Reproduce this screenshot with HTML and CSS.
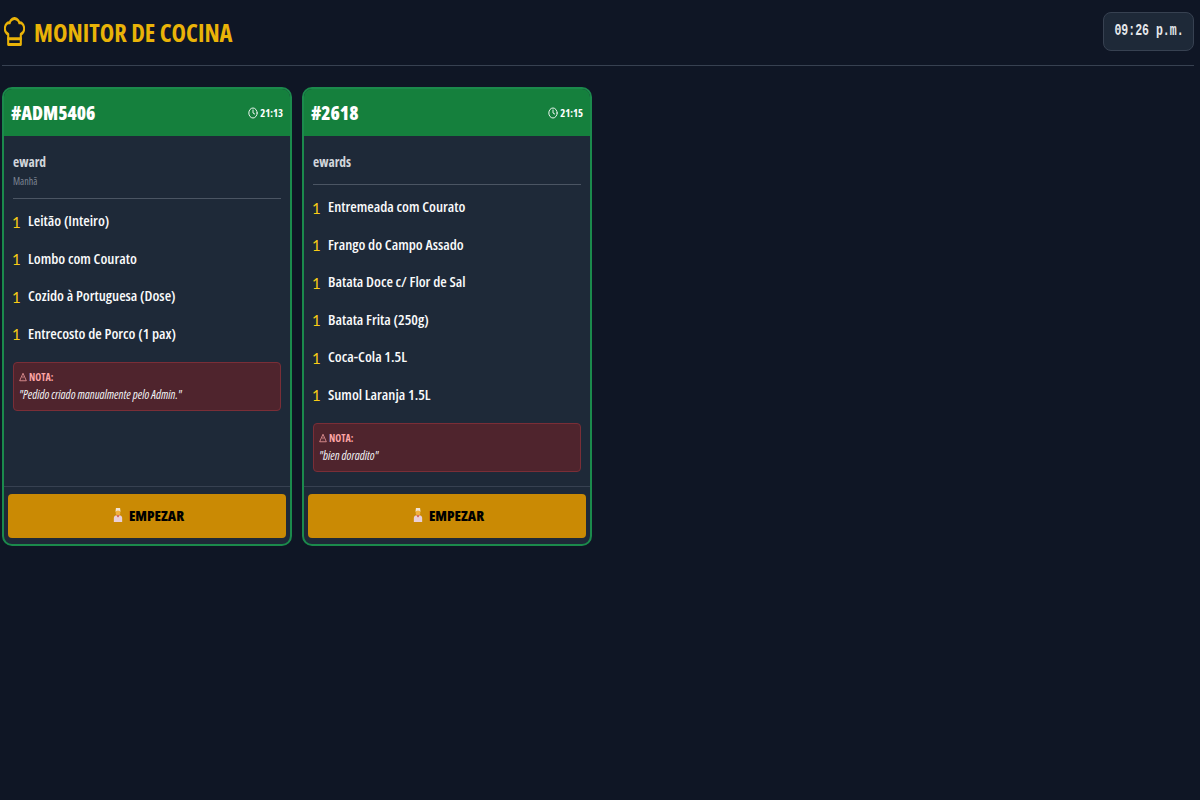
FILE: index.html
```html
<!DOCTYPE html>
<html lang="en">
<head>
    <meta charset="UTF-8">
    <meta name="viewport" content="width=device-width, initial-scale=1.0">
    <title>Monitor de Cocina</title>
    <link rel="stylesheet" href="styles.css">
</head>
<body>
    <header class="topbar">
        <h1 class="title">
            <svg class="title-icon" viewBox="2 2 20 20" preserveAspectRatio="none"><path d="M6 13.87A4 4 0 0 1 7.41 6a5.11 5.11 0 0 1 1.05-1.54 5 5 0 0 1 7.08 0A5.11 5.11 0 0 1 16.59 6 4 4 0 0 1 18 13.87V21H6Z"/><path d="M6 17h12"/></svg>
            <span class="title-text">MONITOR DE COCINA</span>
        </h1>
        <div class="clock"><span class="clock-text">09:26 p.m.</span></div>
    </header>

    <main class="orders">
        <article class="card">
            <div class="card-head">
                <span class="order-id">#ADM5406</span>
                <span class="order-time">
                    <svg class="clock-icon" viewBox="0 0 24 24" preserveAspectRatio="none"><circle cx="12" cy="12" r="10"/><path d="M12 6v6l4 2"/></svg>
                    21:13
                </span>
            </div>
            <div class="card-body">
                <div class="customer">
                    <div class="customer-name">eward</div>
                    <div class="customer-sub">Manhã</div>
                </div>
                <ul class="items">
                    <li class="item"><span class="qty">1</span><span class="item-name">Leitão (Inteiro)</span></li>
                    <li class="item"><span class="qty">1</span><span class="item-name">Lombo com Courato</span></li>
                    <li class="item"><span class="qty">1</span><span class="item-name">Cozido à Portuguesa (Dose)</span></li>
                    <li class="item"><span class="qty">1</span><span class="item-name">Entrecosto de Porco (1 pax)</span></li>
                </ul>
                <div class="note">
                    <div class="note-label">
                        <svg class="warn-icon" viewBox="0 0 24 24" preserveAspectRatio="none"><path d="M12 3 2 21h20Z"/><path d="M12 10v5M12 17.5v.5"/></svg>
                        NOTA:
                    </div>
                    <div class="note-text">"Pedido criado manualmente pelo Admin."</div>
                </div>
            </div>
            <div class="card-foot">
                <button class="start-btn">
                    <svg class="cook-icon" viewBox="0 0 12 18"><path class="cook-hat" d="M3.500 .5h5l.5 4.500H3Z"/><path class="cook-coat" d="M1 17.500v-5C1 10.500 3 9 6 9s5 1.500 5 3.500v5Z"/><circle class="cook-face" cx="6" cy="6.500" r="2.900"/><path class="cook-tie" d="M4 9.400h4L6 12Z"/></svg>
                    EMPEZAR
                </button>
            </div>
        </article>

        <article class="card">
            <div class="card-head">
                <span class="order-id">#2618</span>
                <span class="order-time">
                    <svg class="clock-icon" viewBox="0 0 24 24" preserveAspectRatio="none"><circle cx="12" cy="12" r="10"/><path d="M12 6v6l4 2"/></svg>
                    21:15
                </span>
            </div>
            <div class="card-body">
                <div class="customer">
                    <div class="customer-name">ewards</div>
                </div>
                <ul class="items">
                    <li class="item"><span class="qty">1</span><span class="item-name">Entremeada com Courato</span></li>
                    <li class="item"><span class="qty">1</span><span class="item-name">Frango do Campo Assado</span></li>
                    <li class="item"><span class="qty">1</span><span class="item-name">Batata Doce c/ Flor de Sal</span></li>
                    <li class="item"><span class="qty">1</span><span class="item-name">Batata Frita (250g)</span></li>
                    <li class="item"><span class="qty">1</span><span class="item-name">Coca-Cola 1.5L</span></li>
                    <li class="item"><span class="qty">1</span><span class="item-name">Sumol Laranja 1.5L</span></li>
                </ul>
                <div class="note">
                    <div class="note-label">
                        <svg class="warn-icon" viewBox="0 0 24 24" preserveAspectRatio="none"><path d="M12 3 2 21h20Z"/><path d="M12 10v5M12 17.5v.5"/></svg>
                        NOTA:
                    </div>
                    <div class="note-text">"bien doradito"</div>
                </div>
            </div>
            <div class="card-foot">
                <button class="start-btn">
                    <svg class="cook-icon" viewBox="0 0 12 18"><path class="cook-hat" d="M3.500 .5h5l.5 4.500H3Z"/><path class="cook-coat" d="M1 17.500v-5C1 10.500 3 9 6 9s5 1.500 5 3.500v5Z"/><circle class="cook-face" cx="6" cy="6.500" r="2.900"/><path class="cook-tie" d="M4 9.400h4L6 12Z"/></svg>
                    EMPEZAR
                </button>
            </div>
        </article>
    </main>
</body>
</html>
```

FILE: styles.css
```css
* {
    margin: 0;
    padding: 0;
    box-sizing: border-box;
    font-family: "Open Sans", "Noto Sans", sans-serif;
    font-stretch: 75%;
}

body {
    min-height: 100vh;
    background: #0f1625;
    color: white;
    padding: 12px 6px 0 2px;
}

.topbar {
    display: flex;
    justify-content: space-between;
    align-items: center;
    height: 54px;
    padding-bottom: 15px;
    border-bottom: 1px solid #374151;
    margin-bottom: 21px;
}

.title {
    display: flex;
    align-items: center;
    gap: 9px;
    padding-left: 2px;
    font-size: 24.5px;
    font-weight: 700;
    color: #eab308;
}

.title-text {
    padding-top: 2px;
}

.title-icon {
    width: 21px;
    height: 29px;
    fill: none;
    stroke: #eab308;
    stroke-width: 2;
    stroke-linecap: round;
    stroke-linejoin: round;
}

.clock {
    width: 91px;
    height: 39px;
    display: flex;
    align-items: center;
    justify-content: center;
    background: #1e2938;
    border: 1px solid #374151;
    border-radius: 8px;
}

.clock-text {
    display: inline-block;
    font-family: "Liberation Mono", monospace;
    font-stretch: normal;
    font-size: 16px;
    font-weight: 700;
    color: #e5e7eb;
    white-space: nowrap;
    transform: scaleX(0.72);
}

.orders {
    display: flex;
    align-items: flex-start;
    gap: 10px;
}

.card {
    width: 290px;
    height: 459px;
    display: flex;
    flex-direction: column;
    background: #1e2938;
    border: 2px solid #1b8a4c;
    border-radius: 10px;
    overflow: hidden;
}

.card-head {
    flex: none;
    height: 46.5px;
    display: flex;
    justify-content: space-between;
    align-items: center;
    padding: 1px 7px 0 7px;
    background: #15803d;
}

.order-id {
    font-size: 18.800px;
    font-weight: 800;
}

.order-time {
    display: flex;
    align-items: center;
    gap: 2px;
    font-size: 10.700px;
    font-weight: 700;
}

.clock-icon {
    width: 10px;
    height: 12px;
    fill: none;
    stroke: white;
    stroke-width: 2;
    stroke-linecap: round;
    stroke-linejoin: round;
}

.card-body {
    flex: 1;
    padding: 15.5px 9px 0 9px;
}

.customer {
    padding-bottom: 11px;
    border-bottom: 1px solid #4b5563;
    margin-bottom: 2.5px;
}

.customer-name {
    font-size: 13.5px;
    line-height: 22px;
    font-weight: 700;
    color: #d1d5db;
}

.customer-sub {
    font-size: 10px;
    line-height: 14px;
    padding-top: 1px;
    margin-bottom: -1px;
    color: #7d8694;
}

.items {
    list-style: none;
    margin-bottom: 10.5px;
}

.item {
    display: flex;
    align-items: center;
    height: 37.5px;
}

.qty {
    width: 15px;
    margin-left: -1px;
    margin-right: 1px;
    font-family: Lato, sans-serif;
    font-stretch: normal;
    font-size: 15px;
    font-weight: 400;
    color: #facc15;
    padding-top: 3px;
}

.item-name {
    font-size: 14.850px;
    font-weight: 650;
    color: #f9fafb;
}

.note {
    height: 49px;
    padding: 7px 5px;
    background: #4f242d;
    border: 1px solid #7a2e37;
    border-radius: 4px;
}

.note-label {
    display: flex;
    align-items: center;
    gap: 2px;
    font-size: 10px;
    line-height: 14px;
    font-weight: 700;
    color: #fca5a5;
}

.warn-icon {
    width: 8px;
    height: 10px;
    fill: none;
    stroke: #fca5a5;
    stroke-width: 2;
}

.note-text {
    font-size: 12px;
    line-height: 22px;
    font-style: italic;
    color: #f3f4f6;
    white-space: nowrap;
}

.card-foot {
    flex: none;
    height: 58px;
    padding: 7px 4px;
    border-top: 1px solid #374151;
}

.start-btn {
    width: 100%;
    height: 44px;
    display: flex;
    align-items: center;
    justify-content: center;
    gap: 6px;
    padding: 0 0 2px 3px;
    border: none;
    border-radius: 4px;
    background: #ca8a04;
    color: black;
    font-size: 14.5px;
    font-weight: 800;
}

.cook-icon {
    width: 10px;
    height: 18px;
}

.cook-hat { fill: #f3e4d4; }
.cook-face { fill: #f0b040; }
.cook-coat { fill: #e8cfd8; }
.cook-tie { fill: #d0503a; }
```
